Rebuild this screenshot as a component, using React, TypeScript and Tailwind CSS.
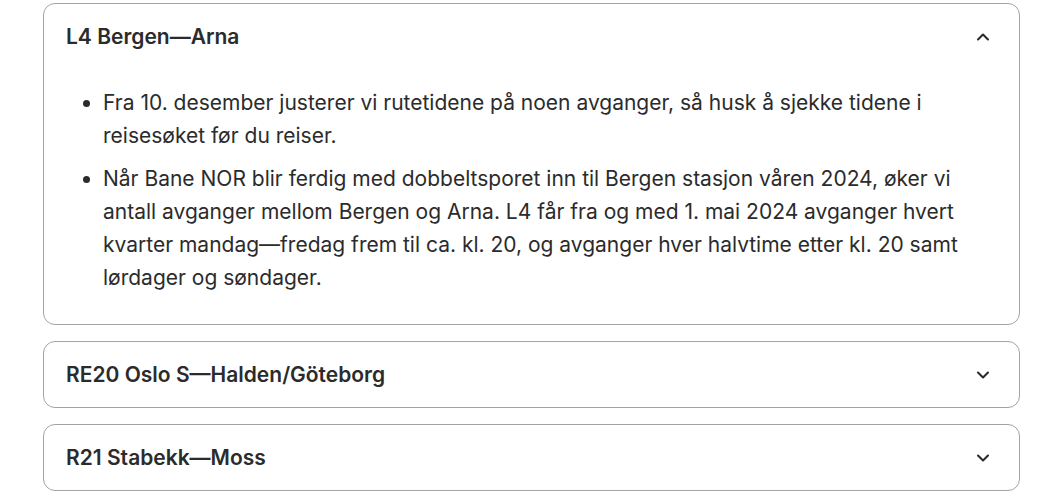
import React, { useState } from "react";
import { ChevronDown, ChevronUp } from "lucide-react";

interface Line {
  id: string;
  title: string;
  notes: string[];
}

const lines: Line[] = [
  {
    id: "l4",
    title: "L4 Bergen—Arna",
    notes: [
      "Fra 10. desember justerer vi rutetidene på noen avganger, så husk å sjekke tidene i reisesøket før du reiser.",
      "Når Bane NOR blir ferdig med dobbeltsporet inn til Bergen stasjon våren 2024, øker vi antall avganger mellom Bergen og Arna. L4 får fra og med 1. mai 2024 avganger hvert kvarter mandag—fredag frem til ca. kl. 20, og avganger hver halvtime etter kl. 20 samt lørdager og søndager.",
    ],
  },
  { id: "re20", title: "RE20 Oslo S—Halden/Göteborg", notes: [] },
  { id: "r21", title: "R21 Stabekk—Moss", notes: [] },
];

const App: React.FC = () => {
  const [open, setOpen] = useState<string | null>("l4");

  return (
    <div className="bg-white min-h-screen pt-[3px] font-['Inter',sans-serif] text-[#2b2b2c]">
      <div className="ml-[43px] w-[977px] flex flex-col gap-[16px]">
        {lines.map((line) => {
          const isOpen = open === line.id;
          return (
            <div key={line.id} className="border border-[#a3a3a3] rounded-[12px] bg-white">
              <button
                onClick={() => setOpen(isOpen ? null : line.id)}
                className="w-full h-[65px] flex items-center justify-between pl-[22px] pr-[26px] text-left cursor-pointer"
              >
                <span className="text-[21px] font-semibold">{line.title}</span>
                {isOpen ? (
                  <ChevronUp className="w-[20px] h-[20px]" strokeWidth={2.5} />
                ) : (
                  <ChevronDown className="w-[20px] h-[20px]" strokeWidth={2.5} />
                )}
              </button>
              {isOpen && (
                <ul className="list-disc pl-[59px] pr-[24px] pt-[17px] pb-[30px] text-[21px] leading-[33px] space-y-[10px]">
                  {line.notes.map((note, i) => (
                    <li key={i}>{note}</li>
                  ))}
                </ul>
              )}
            </div>
          );
        })}
      </div>
    </div>
  );
};

export default App;
